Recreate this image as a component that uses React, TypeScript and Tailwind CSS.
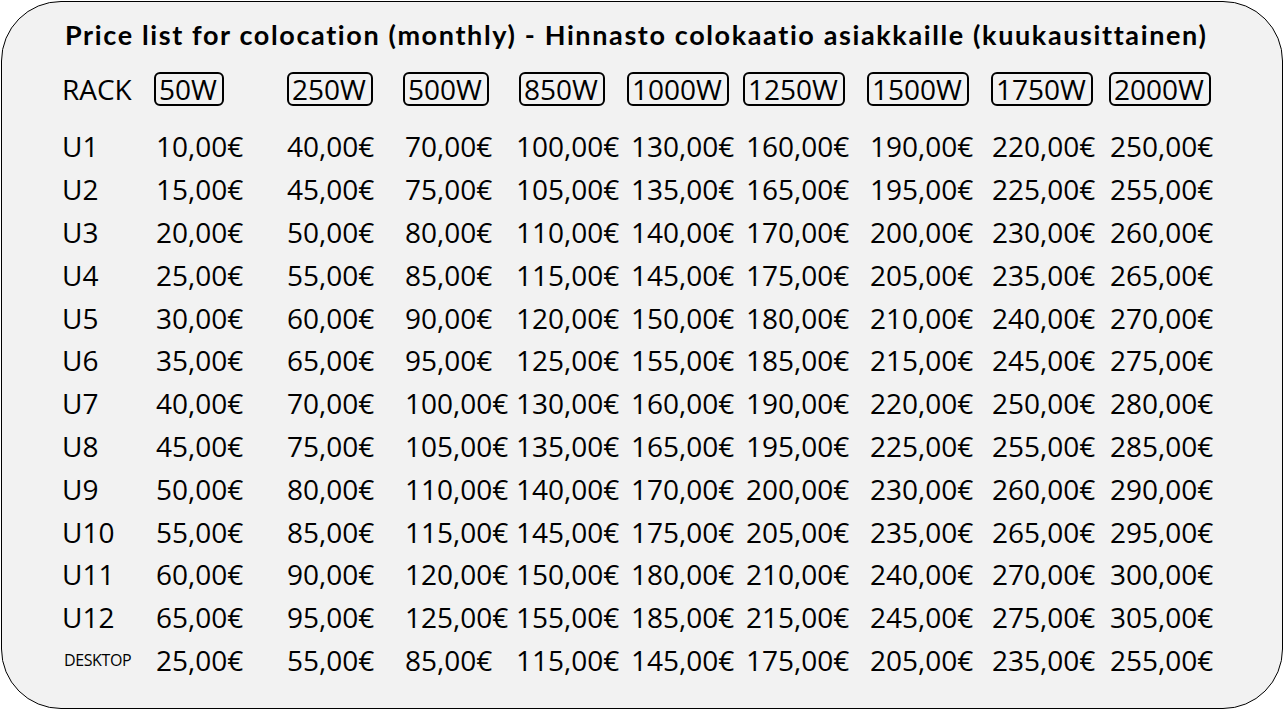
const columns = [
  { label: "50W", base: 10, desktop: 25, valuePad: "pl-[2px]" },
  { label: "250W", base: 40, desktop: 55, valuePad: "pl-0" },
  { label: "500W", base: 70, desktop: 85, valuePad: "pl-[2px]" },
  { label: "850W", base: 100, desktop: 115, valuePad: "-ml-[3px]" },
  { label: "1000W", base: 130, desktop: 145, valuePad: "pl-[4px]" },
  { label: "1250W", base: 160, desktop: 175, valuePad: "pl-[3px]" },
  { label: "1500W", base: 190, desktop: 205, valuePad: "pl-[3px]" },
  { label: "1750W", base: 220, desktop: 235, valuePad: "pl-[1px]" },
  { label: "2000W", base: 250, desktop: 255, valuePad: "pl-[1px]" },
];

const rows = Array.from({ length: 12 }, (_, index) => ({
  label: `U${index + 1}`,
  step: index,
}));

function price(value: number) {
  return `${value},00€`;
}

const gridCols = "grid grid-cols-[94px_133px_116px_116px_108px_116px_124px_124px_118px_1fr]";

export default function App() {
  return (
    <div className="w-[1284px] h-[710px] bg-white p-px">
      <div
        className="h-[708px] w-[1282px] rounded-[60px] border-[1.5px] border-black bg-[#f2f2f2] pl-[58px] text-black"
        style={{ fontFamily: '"Open Sans", "DejaVu Sans", sans-serif' }}
      >
        <h1
          className="pt-[14px] pl-[5px] text-[27px] font-bold leading-[38px] tracking-[1.62px] whitespace-nowrap"
          style={{ fontFamily: 'Lato, "Noto Sans", sans-serif' }}
        >
          Price list for colocation (monthly) - Hinnasto colokaatio asiakkaille (kuukausittainen)
        </h1>

        <div className={`${gridCols} mt-[18px] h-[34px] items-center`}>
          <span className="pl-[2px] text-[28px] leading-none">RACK</span>
          {columns.map((col) => (
            <span key={col.label}>
              <span className="inline-block rounded-[6px] border-2 border-black pl-[3px] pr-[5px] text-[28px] leading-[30px]">
                {col.label}
              </span>
            </span>
          ))}
        </div>

        <div className="mt-[19px]">
          {rows.map((row) => (
            <div key={row.label} className={`${gridCols} h-[42.8px] items-center text-[28px] leading-none`}>
              <span className="pl-[2px]">{row.label}</span>
              {columns.map((col) => (
                <span key={col.label} className={`whitespace-nowrap ${col.valuePad}`}>
                  {price(col.base + row.step * 5)}
                </span>
              ))}
            </div>
          ))}
          <div className={`${gridCols} h-[42.8px] items-center text-[28px] leading-none`}>
            <span className="pl-[4px] text-[16px] tracking-[-0.4px]">DESKTOP</span>
            {columns.map((col) => (
              <span key={col.label} className={`whitespace-nowrap ${col.valuePad}`}>
                {price(col.desktop)}
              </span>
            ))}
          </div>
        </div>
      </div>
    </div>
  );
}
